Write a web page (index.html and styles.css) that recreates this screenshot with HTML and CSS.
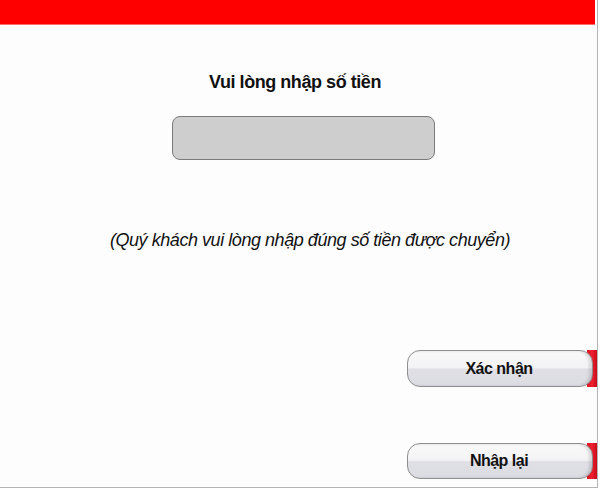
FILE: index.html
```html
<!DOCTYPE html>
<html lang="vi">
<head>
<meta charset="utf-8">
<link rel="stylesheet" href="styles.css">
</head>
<body>
<div class="frame">
  <div class="topbar"></div>
  <div class="content">
    <h1 class="title">Vui lòng nhập số tiền</h1>
    <div class="amount"></div>
    <p class="hint">(Quý khách vui lòng nhập đúng số tiền được chuyển)</p>
  </div>
  <div class="actions">
    <div class="btn-row first">
      <div class="btn-wrap"><button class="btn">Xác nhận</button></div>
    </div>
    <div class="btn-row second">
      <div class="btn-wrap"><button class="btn">Nhập lại</button></div>
    </div>
  </div>
</div>
</body>
</html>
```
FILE: styles.css
```css
html, body {
  margin: 0;
  padding: 0;
  background: #ffffff;
}
body {
  font-family: "Liberation Sans", Arial, sans-serif;
  color: #111;
}
.frame {
  width: 597px;
  height: 487px;
  border-right: 1px solid #b4b4b4;
  border-bottom: 1px solid #b4b4b4;
  background: #fdfdfd;
  display: flex;
  flex-direction: column;
}
.topbar {
  height: 25px;
  width: 595px;
  background: #fe0000;
  border-bottom: 1px solid #ff6a6a;
  box-sizing: border-box;
}
.content {
  display: flex;
  flex-direction: column;
  align-items: center;
  padding-left: 10px;
}
.title {
  margin: 46px 0 0 -17px;
  font-size: 18px;
  letter-spacing: -0.45px;
  line-height: 22px;
  font-weight: bold;
}
.amount {
  margin-top: 23px;
  width: 263px;
  height: 44px;
  box-sizing: border-box;
  background: #cecece;
  border: 1.5px solid #7a7a7a;
  border-radius: 8px;
}
.hint {
  margin: 69px 0 0 13px;
  font-size: 18px;
  letter-spacing: -0.45px;
  line-height: 22px;
  font-style: italic;
}
.actions {
  display: flex;
  flex-direction: column;
}
.btn-row {
  display: flex;
  justify-content: flex-end;
}
.btn-row.first {
  margin-top: 99px;
}
.btn-row.second {
  margin-top: 56px;
}
.btn-wrap {
  width: 190px;
  display: flex;
  background: linear-gradient(to right, rgba(0,0,0,0) 180px, #d8141e 180px, #ee2030 185px, #c80c18 190px);
}
.btn {
  width: 186px;
  height: 37px;
  box-sizing: border-box;
  border: 1.5px solid #8e8e8e;
  border-radius: 13px;
  background: linear-gradient(to bottom, #f9f9f9 0%, #f3f3f5 48%, #dfdfe5 52%, #dcdce3 100%);
  box-shadow: inset -3px 0 3px rgba(0,0,0,0.12);
  font-family: "Liberation Sans", Arial, sans-serif;
  font-weight: bold;
  font-size: 16px;
  letter-spacing: -0.5px;
  color: #111;
  padding: 0 2px 0 0;
}
.btn-row.second .btn {
  height: 36px;
}
```
